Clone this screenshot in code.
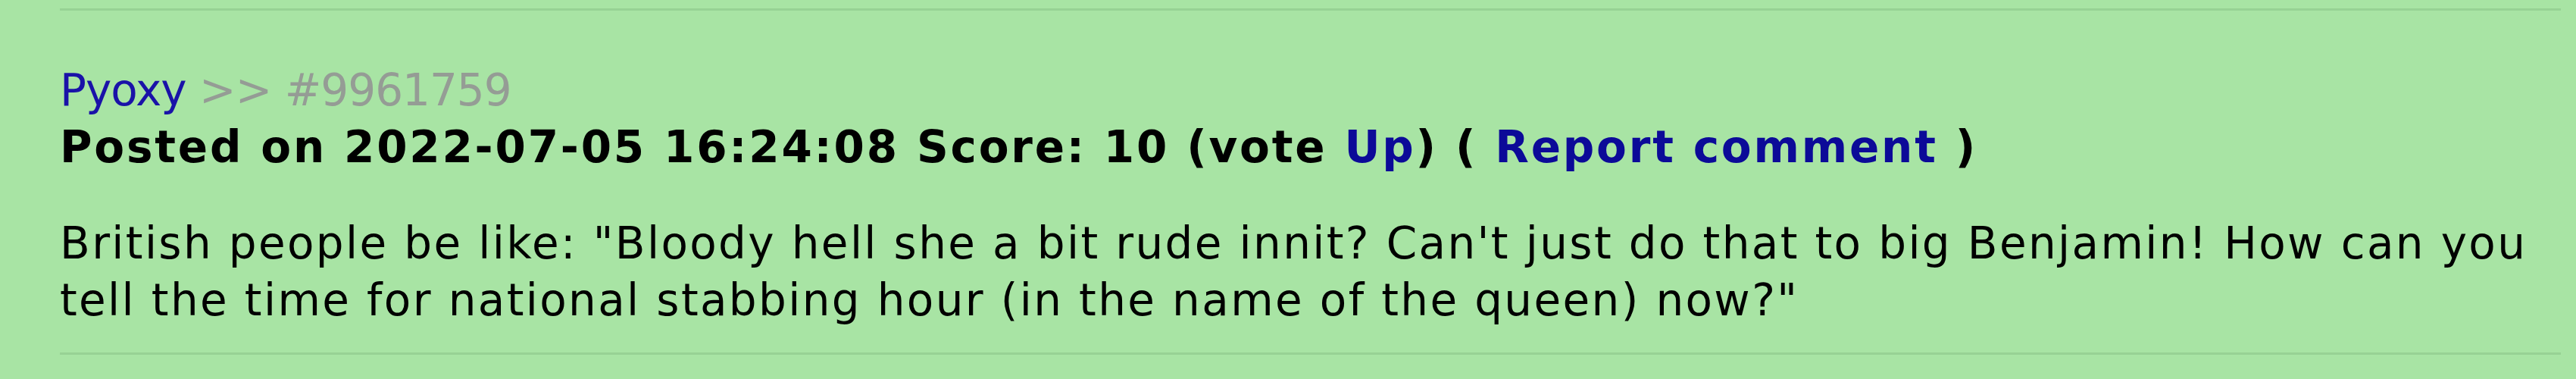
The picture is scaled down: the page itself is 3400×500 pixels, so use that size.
import React from 'react';

interface Comment {
  author: string;
  id: number;
  postedAt: string;
  score: number;
  lines: string[];
}

const comment: Comment = {
  author: 'Pyoxy',
  id: 9961759,
  postedAt: '2022-07-05 16:24:08',
  score: 10,
  lines: [
    'British people be like: "Bloody hell she a bit rude innit? Can\'t just do that to big Benjamin! How can you',
    'tell the time for national stabbing hour (in the name of the queen) now?"',
  ],
};

const CommentBlock = ({ c }: { c: Comment }) => {
  return (
    <div className="pt-[68px] pb-[31px]">
      {/* Author and comment id */}
      <div className="whitespace-nowrap tracking-[-1px]">
        <a className="text-[#1a12a8] no-underline">{c.author}</a>
        <span className="text-[#959c95]"> &gt;&gt; #{c.id}</span>
      </div>

      {/* Meta line: date, score, actions */}
      <div className="whitespace-nowrap font-bold text-black tracking-[2.8px]">
        Posted on {c.postedAt} Score: {c.score} (vote{' '}
        <a className="text-[#0c0a98]">Up</a>) ({' '}
        <a className="text-[#0c0a98]">Report comment</a> )
      </div>

      {/* Body */}
      <div className="mt-[52px] text-black tracking-[2.35px]">
        {c.lines.map((line, i) => (
          <div key={i} className="whitespace-nowrap">
            {line}
          </div>
        ))}
      </div>
    </div>
  );
};

export default function App() {
  return (
    <div
      className="min-h-[500px] w-[3400px] bg-[#a8e4a4] pt-[11px] pl-[79px] pr-[20px] text-[58px] leading-[75px]"
      style={{ fontFamily: '"DejaVu Sans", sans-serif' }}
    >
      <div className="h-[3px] bg-[#97d294]" />
      <CommentBlock c={comment} />
      <div className="h-[3px] bg-[#97d294]" />
    </div>
  );
}
